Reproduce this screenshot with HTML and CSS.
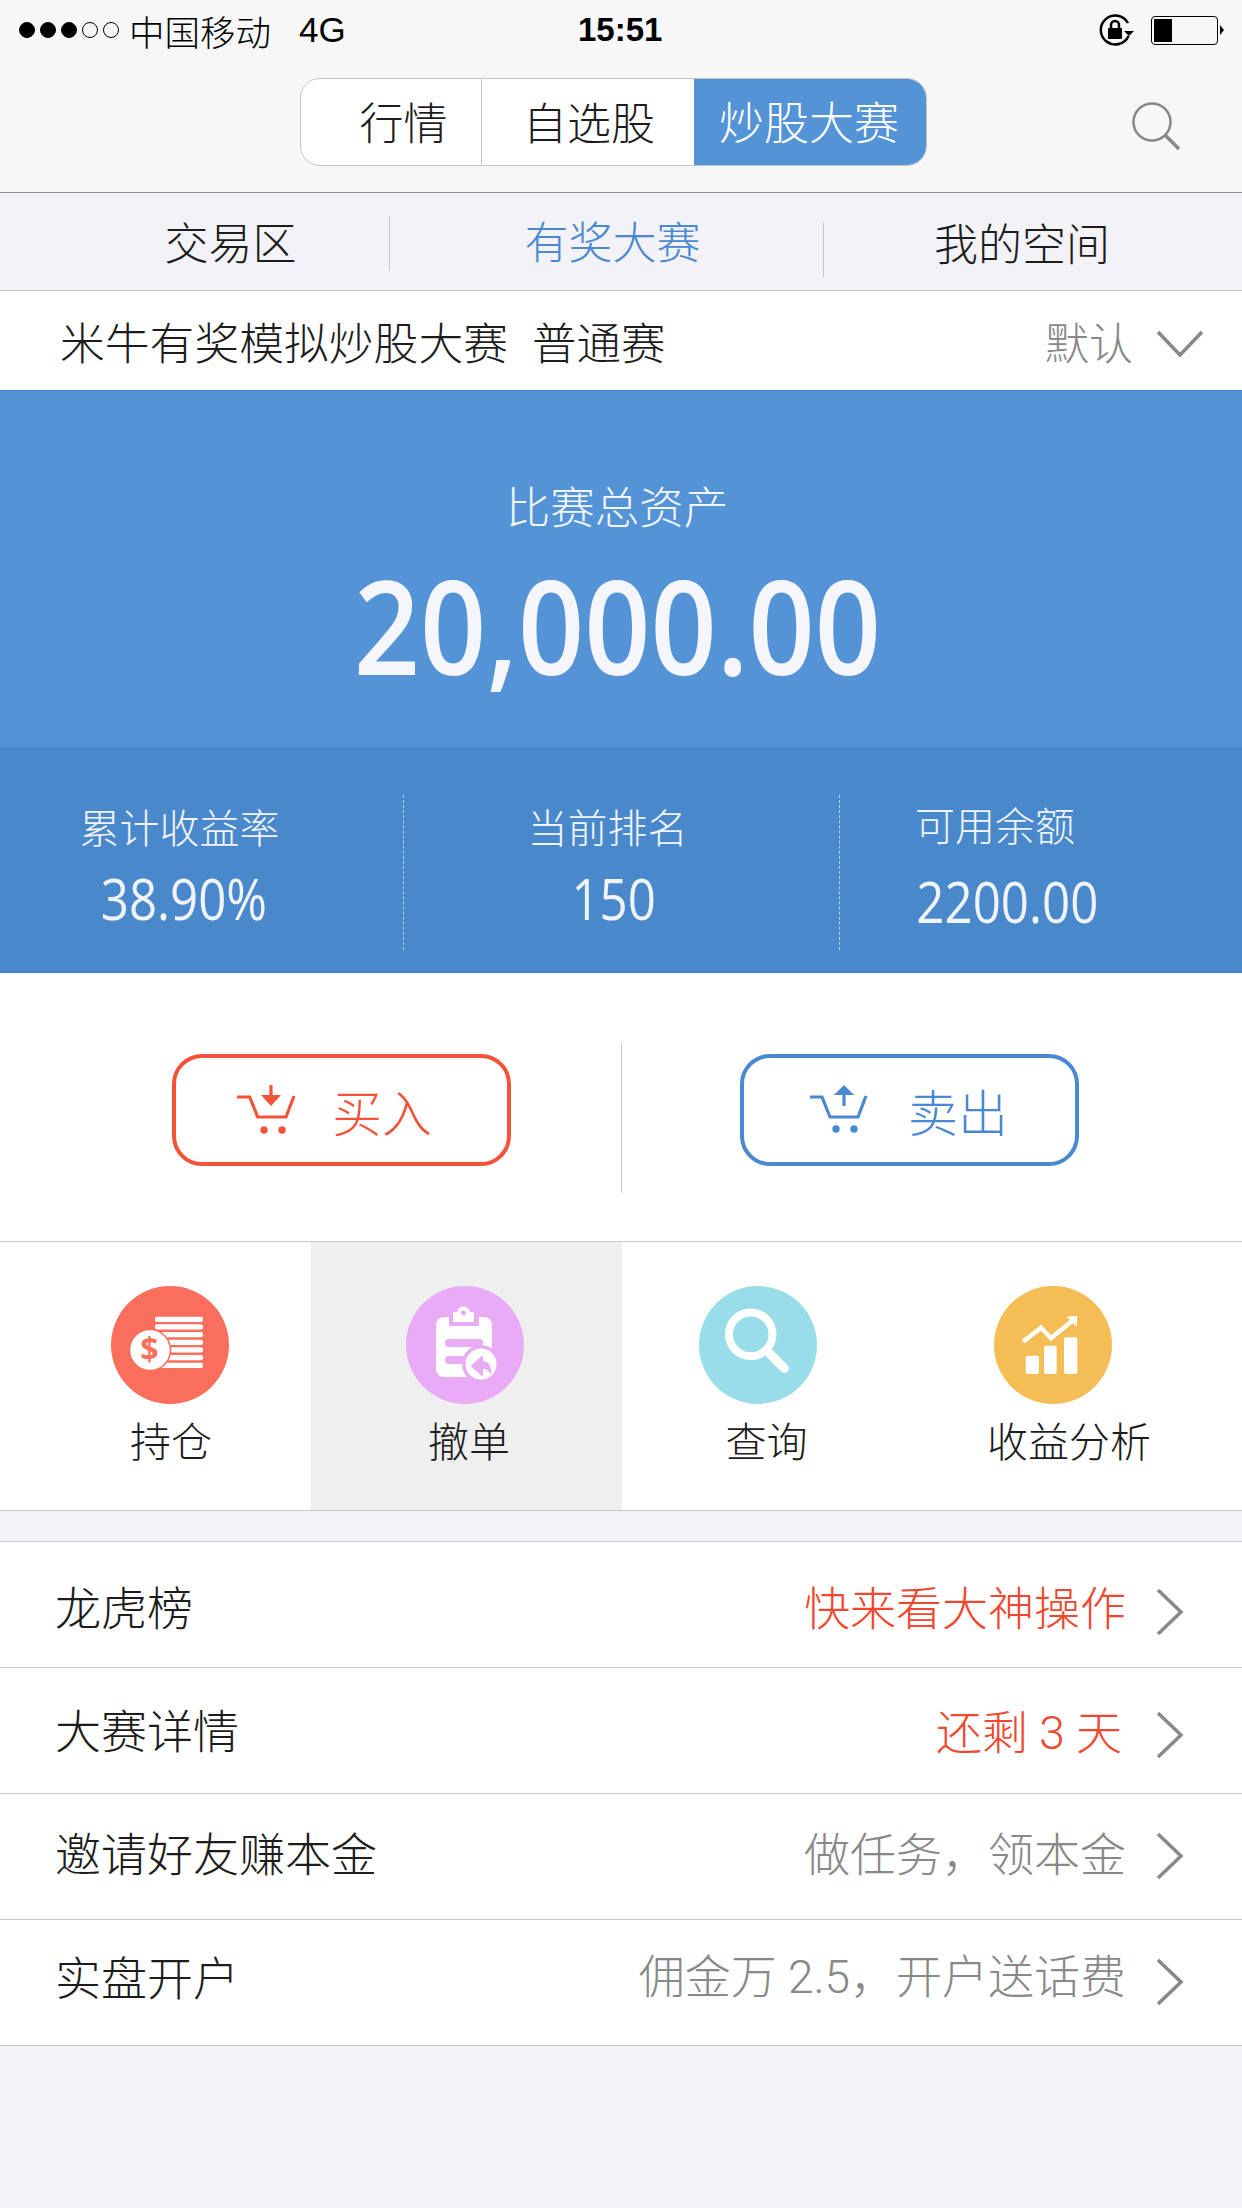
FILE: index.html
```html
<!DOCTYPE html>
<html lang="zh-CN">
<head>
<meta charset="UTF-8" />
<meta name="viewport" content="width=device-width, initial-scale=1" />
<title>炒股大赛</title>
<link rel="stylesheet" href="styles.css">
</head>
<body>

<header class="top">
  <div class="status">
    <div class="signal">
      <i class="dot on"></i><i class="dot on"></i><i class="dot on"></i><i class="dot"></i><i class="dot"></i>
    </div>
    <span class="carrier">中国移动</span>
    <span class="net">4G</span>
    <span class="time">15:51</span>
    <svg class="lock" width="36" height="32" viewBox="0 0 36 32">
      <path d="M29.5 22A14.5 14.5 0 1 1 29 9" fill="none" stroke="#000" stroke-width="2.5"/>
      <path d="M25 17h10l-5 5z" fill="#000"/>
      <rect x="9" y="14" width="14" height="11" rx="1" fill="#000"/>
      <path d="M12 14v-3a4 4 0 0 1 8 0v3" fill="none" stroke="#000" stroke-width="2.5"/>
    </svg>
    <div class="battery"><i class="battery-fill"></i></div>
    <i class="battery-nub"></i>
  </div>
  <nav class="nav">
    <div class="segment">
      <a class="seg seg-a">行情</a>
      <a class="seg seg-b">自选股</a>
      <a class="seg seg-c active">炒股大赛</a>
    </div>
    <svg class="search" width="50" height="50" viewBox="0 0 50 50">
      <circle cx="20" cy="20" r="18.5" fill="none" stroke="#888" stroke-width="2.5"/>
      <path d="M33 33l14 14" stroke="#888" stroke-width="3.5"/>
    </svg>
  </nav>
</header>

<div class="subnav">
  <a class="sub sub-a">交易区</a>
  <a class="sub sub-b blue">有奖大赛</a>
  <a class="sub sub-c">我的空间</a>
</div>

<div class="title-row">
  <span class="title">米牛有奖模拟炒股大赛</span>
  <span class="title title-kind">普通赛</span>
  <span class="sort">默认</span>
  <svg class="sort-arrow" width="48" height="28" viewBox="0 0 48 28">
    <path d="M2 2l22 23L46 2" fill="none" stroke="#888" stroke-width="3.5"/>
  </svg>
</div>

<section class="hero">
  <p class="hero-label">比赛总资产</p>
  <p class="hero-value">20,000.00</p>
</section>

<section class="stats">
  <div class="stat stat-a">
    <p class="stat-label">累计收益率</p>
    <p class="stat-value">38.90%</p>
  </div>
  <div class="stat stat-b">
    <p class="stat-label">当前排名</p>
    <p class="stat-value">150</p>
  </div>
  <div class="stat stat-c">
    <p class="stat-label">可用余额</p>
    <p class="stat-value">2200.00</p>
  </div>
</section>

<section class="trade">
  <div class="trade-side">
    <a class="trade-btn buy">
      <svg width="60" height="50" viewBox="0 0 60 50">
        <path d="M0 12h12.7l8 20H49l8-21" fill="none" stroke="#f4533a" stroke-width="3.2"/>
        <path d="M34 0v11" stroke="#f4533a" stroke-width="3.2"/>
        <path d="M24 10h20L34 21z" fill="#f4533a"/>
        <circle cx="27" cy="45" r="3.7" fill="#f4533a"/>
        <circle cx="45" cy="45" r="3.7" fill="#f4533a"/>
      </svg>
      <span>买入</span>
    </a>
  </div>
  <div class="trade-side sell-side">
    <a class="trade-btn sell">
      <svg width="60" height="50" viewBox="0 0 60 50">
        <path d="M0 12h12l8 20h28l8-21" fill="none" stroke="#4a88d2" stroke-width="3.2"/>
        <path d="M34 10v11" stroke="#4a88d2" stroke-width="3.2"/>
        <path d="M24 10h20L34 0z" fill="#4a88d2"/>
        <circle cx="26" cy="44" r="3.7" fill="#4a88d2"/>
        <circle cx="44" cy="44" r="3.7" fill="#4a88d2"/>
      </svg>
      <span>卖出</span>
    </a>
  </div>
</section>

<section class="tools">
  <a class="tool tool-a">
    <svg class="tool-icon" width="118" height="118" viewBox="0 0 118 118">
      <circle cx="59" cy="59" r="59" fill="#f96f5b"/>
      <g fill="#fff">
        <rect x="44" y="30.7" width="48" height="5.3" rx="2"/>
        <rect x="44" y="38.3" width="48" height="5.3" rx="2"/>
        <rect x="44" y="46" width="48" height="5.3" rx="2"/>
        <rect x="44" y="53.7" width="48" height="5.3" rx="2"/>
        <rect x="44" y="61.3" width="48" height="5.3" rx="2"/>
        <rect x="44" y="69" width="48" height="5.3" rx="2"/>
        <rect x="44" y="76.7" width="48" height="5.3" rx="2"/>
      </g>
      <circle cx="39" cy="64" r="20.5" fill="#fff" stroke="#f96f5b" stroke-width="1.5"/>
      <text class="coin-sign" x="38.5" y="75" text-anchor="middle">$</text>
    </svg>
    <span class="tool-label">持仓</span>
  </a>
  <a class="tool tool-b">
    <svg class="tool-icon" width="118" height="118" viewBox="0 0 118 118">
      <circle cx="59" cy="59" r="59" fill="#e9aaf6"/>
      <rect x="30" y="31" width="56" height="60" rx="8" fill="#fff"/>
      <rect x="43" y="28" width="30" height="12" fill="#e9aaf6"/>
      <rect x="47" y="26" width="21" height="10" rx="1" fill="#fff"/>
      <circle cx="57.5" cy="27" r="6.5" fill="#fff"/>
      <circle cx="57.5" cy="27" r="2.5" fill="#e9aaf6"/>
      <rect x="39" y="53" width="38" height="8" rx="4" fill="#e9aaf6"/>
      <rect x="39" y="70" width="30" height="8" rx="4" fill="#e9aaf6"/>
      <circle cx="75" cy="78" r="19" fill="#e9aaf6"/>
      <circle cx="75" cy="78" r="15.5" fill="#fff"/>
      <path d="M64.5 80L77 69v6q9 1 8 14q-3-7-8-6v8z" fill="#e9aaf6"/>
    </svg>
    <span class="tool-label">撤单</span>
  </a>
  <a class="tool tool-c">
    <svg class="tool-icon" width="118" height="118" viewBox="0 0 118 118">
      <circle cx="59" cy="59" r="59" fill="#98dde7"/>
      <circle cx="51.7" cy="48.3" r="21.8" fill="none" stroke="#fff" stroke-width="8"/>
      <path d="M68 65l17.5 17.5" stroke="#fff" stroke-width="9" stroke-linecap="round"/>
    </svg>
    <span class="tool-label">查询</span>
  </a>
  <a class="tool tool-d">
    <svg class="tool-icon" width="118" height="118" viewBox="0 0 118 118">
      <circle cx="59" cy="59" r="59" fill="#f5bd55"/>
      <g fill="#fff">
        <rect x="31.7" y="69.7" width="13.3" height="18.3" rx="2"/>
        <rect x="50" y="59.7" width="12.7" height="28.3" rx="2"/>
        <rect x="70" y="51.3" width="13.3" height="36.7" rx="2"/>
        <path d="M83.3 29.7l-10.6 1 10 10z"/>
      </g>
      <path d="M29 55.7l18-14 10 10.6L78 35" fill="none" stroke="#fff" stroke-width="4.5"/>
    </svg>
    <span class="tool-label">收益分析</span>
  </a>
</section>

<section class="list">
  <a class="row">
    <span class="row-name">龙虎榜</span>
    <span class="row-note red">快来看大神操作</span>
    <svg class="chevron" width="28" height="48" viewBox="0 0 28 48"><path d="M2 2l23 22L2 46" fill="none" stroke="#888" stroke-width="3.5"/></svg>
  </a>
  <a class="row row-2">
    <span class="row-name">大赛详情</span>
    <span class="row-note red note-days">还剩 3 天</span>
    <svg class="chevron" width="28" height="48" viewBox="0 0 28 48"><path d="M2 2l23 22L2 46" fill="none" stroke="#888" stroke-width="3.5"/></svg>
  </a>
  <a class="row row-3">
    <span class="row-name">邀请好友赚本金</span>
    <span class="row-note">做任务，领本金</span>
    <svg class="chevron" width="28" height="48" viewBox="0 0 28 48"><path d="M2 2l23 22L2 46" fill="none" stroke="#888" stroke-width="3.5"/></svg>
  </a>
  <a class="row row-4">
    <span class="row-name">实盘开户</span>
    <span class="row-note note-up">佣金万 2.5，开户送话费</span>
    <svg class="chevron" width="28" height="48" viewBox="0 0 28 48"><path d="M2 2l23 22L2 46" fill="none" stroke="#888" stroke-width="3.5"/></svg>
  </a>
</section>

</body>
</html>
```

FILE: styles.css
```css
* { box-sizing: border-box; }
html, body { margin: 0; padding: 0; }
body {
  width: 1242px; height: 2208px; overflow: hidden; background: #f2f2f7; color: #1c1c1c;
  font-family: "Liberation Sans", "Noto Sans CJK SC", sans-serif; font-weight: 300;
}
p { margin: 0; }
svg { display: block; flex: none; }

/* Status bar + top nav */
.top { height: 193px; background: #f7f7f7; border-bottom: 1px solid #8f8f8f; }
.status { height: 60px; display: flex; align-items: center; padding-left: 19px; color: #000; font-size: 35.5px; }
.signal { display: flex; gap: 5px; width: 110px; }
.dot { width: 16px; height: 16px; border-radius: 50%; border: 1px solid #000; }
.dot.on { background: #000; }
.carrier { width: 170px; }
.net { width: 279px; font-size: 35px; font-weight: 400; }
.time { width: 521px; font-size: 33px; font-weight: 700; }
.battery {
  width: 67px; height: 29px; margin-left: 16px; padding: 2px; border: 1.5px solid #000; border-radius: 4px;
}
.battery-fill { display: block; width: 18px; height: 100%; background: #000; }
.battery-nub {
  width: 0; height: 0; margin-left: 2px;
  border-left: 4px solid #000; border-top: 5px solid transparent; border-bottom: 5px solid transparent;
}
.nav { display: flex; align-items: flex-start; padding: 18px 0 0 300px; }
.segment {
  width: 627px; height: 88px; display: flex; background: #fff;
  border: 1.5px solid #c4c4c4; border-radius: 20px; overflow: hidden;
}
.seg { display: flex; align-items: center; justify-content: center; font-size: 44px; color: #1c1c1c; padding-bottom: 3px; }
.seg-a { width: 181px; padding-left: 25px; border-right: 1.5px solid #c4c4c4; }
.seg-b { width: 214px; }
.seg-c { flex: 1; margin: -2px; padding-right: 4px; font-size: 45px; }
.seg.active { background: #5593d7; color: #fff; }
.search { margin: 24px 0 0 205px; }

/* Second level tabs */
.subnav { height: 98px; display: flex; border-bottom: 1.5px solid #c8c8c8; background: #f2f2f7; }
.sub { display: flex; align-items: center; justify-content: center; font-size: 44px; color: #1c1c1c; }
.sub-a { width: 390px; margin: 23px 0 19px; padding: 0 0 6px 72px; border-right: 1px solid #c8c8c8; }
.sub-b { width: 434px; margin: 29px 0 13px; padding: 0 0 20px 12px; border-right: 1px solid #c8c8c8; }
.sub-c { flex: 1; padding-right: 22px; }
.sub.blue { color: #4a88d2; }

/* Contest title */
.title-row { height: 99px; display: flex; align-items: center; padding-left: 60px; background: #fff; }
.title { font-size: 44.8px; color: #1c1c1c; }
.title-kind { margin-left: 24px; font-size: 44.5px; }
.sort { margin-left: auto; font-size: 44px; color: #888; }
.sort-arrow { margin: 6px 38px 0 23px; }

/* Total assets */
.hero {
  height: 357px; background: #5593d7; border-top: 1px solid #3f80cc; color: #fff;
  text-align: center; padding-top: 88px;
}
.hero-label { font-size: 44.5px; line-height: 60px; padding-right: 8px; color: #f3f6fb; }
.hero-value {
  margin-top: 10px; padding-right: 8px; font-family: "Open Sans", sans-serif; font-weight: 600;
  font-size: 131px; line-height: 150px; transform: scaleX(.885); color: #f4f6fb;
}

/* Three figures under it */
.stats {
  height: 226px; display: flex; padding: 48px 0 21px; background: #4a88cc; border-bottom: 2px solid #3e7fcb;
  color: #f0f4fa; text-align: center;
}
.stat { padding-top: 9px; }
.stat-a { width: 403px; padding-right: 44px; }
.stat-b { width: 437px; padding-right: 28px; border-left: 1px dashed #b9d1ec; border-right: 1px dashed #b9d1ec; }
.stat-c { flex: 1; padding-right: 92px; }
.stat-label { font-size: 40px; line-height: 50px; }
.stat-value {
  margin-top: 9px; font-family: "Open Sans", sans-serif; font-weight: 500;
  font-size: 56px; line-height: 70px; transform: scaleX(.88);
}
.stat-a .stat-value { padding-left: 10px; }
.stat-b .stat-value { padding-left: 14px; }
.stat-c .stat-label { margin-top: -2px; }
.stat-c .stat-value { margin-top: 14px; padding-left: 28px; }

/* Buy / sell */
.trade { height: 269px; display: flex; padding-top: 70px; background: #fff; border-bottom: 1.5px solid #c8c8c8; }
.trade-side { width: 622px; height: 150px; padding: 11px 0 0 172px; }
.sell-side { padding-left: 118px; border-left: 1px solid #c8c8c8; }
.trade-btn {
  width: 339px; height: 112px; display: flex; align-items: center; padding-left: 61px; gap: 35px;
  border: 4px solid; border-radius: 30px; font-size: 50px;
}
.sell { padding-left: 66px; gap: 38px; }
.buy { color: #f4533a; border-color: #f4533a; }
.sell { color: #4a88d2; border-color: #4a88d2; }

/* Tool grid */
.tools { height: 269px; display: grid; grid-template-columns: repeat(4, 311px); background: #fff; border-bottom: 1.5px solid #c8c8c8; }
.tool { display: flex; flex-direction: column; align-items: center; padding-top: 44px; }
.tool-b { background: #efefef; }
.tool-label { margin-top: 13px; font-size: 41px; line-height: 52px; color: #1c1c1c; }
.tool-a .tool-icon { margin-left: 29px; }
.tool-a .tool-label { margin-left: 31px; }
.tool-b .tool-icon { margin-right: 3px; }
.tool-b .tool-label { margin-left: 5px; }
.tool-c .tool-icon { margin-right: 39px; }
.tool-c .tool-label { margin-right: 22px; }
.tool-d .tool-icon { margin-right: 71px; }
.tool-d .tool-label { margin-right: 39px; }
.coin-sign { font-family: "Open Sans", sans-serif; font-weight: 700; font-size: 32px; fill: #f96f5b; }

/* Link rows */
.list { margin-top: 30px; background: #fff; border-top: 1.5px solid #c8c8c8; }
.row { height: 126px; display: flex; align-items: center; padding: 0 58px 0 55px; border-bottom: 1.5px solid #c8c8c8; }
.row-2 { padding-bottom: 6px; }
.row-3 { padding-bottom: 12px; }
.row-4 { padding-bottom: 16px; }
.row-name { font-size: 46px; color: #1c1c1c; }
.row-note { margin-left: auto; font-family: Roboto, "Noto Sans CJK SC", sans-serif; font-size: 46px; color: #888; }
.row-note.red { color: #f0482f; }
.note-days { margin: 3px 4px 0 auto; }
.note-up { margin-bottom: 4px; }
.chevron { margin: 14px 0 0 30px; }
.row-3 .chevron { margin-top: 11px; }
```
